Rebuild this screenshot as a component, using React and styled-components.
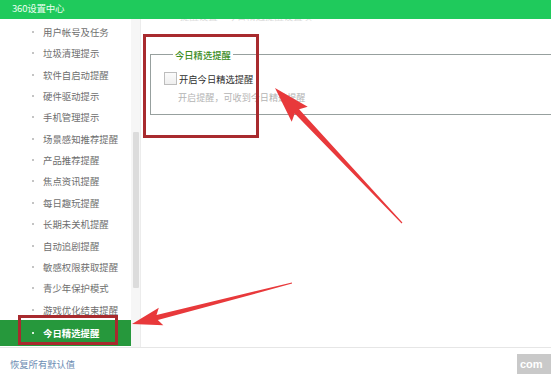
import React from "react";
import styled, { createGlobalStyle } from "styled-components";

const Global = createGlobalStyle`
  html, body { margin: 0; padding: 0; background: #fff; }
  body { width: 551px; height: 378px; overflow: hidden; font-family: "Noto Sans CJK SC", "Noto Sans", sans-serif; }
`;

const Window = styled.div`
  position: relative;
  width: 551px;
  height: 378px;
  display: flex;
  flex-direction: column;
  background: #fff;
  overflow: hidden;
`;

const TitleBar = styled.div`
  height: 19px;
  flex: none;
  background: #1fca5c;
  color: #eafff0;
  font-size: 9.5px;
  line-height: 17px;
  padding-left: 12px;
  letter-spacing: -0.2px;
`;

const Body = styled.div`
  flex: 1;
  display: flex;
  min-height: 0;
`;

const Sidebar = styled.div`
  width: 140px;
  flex: none;
  display: flex;
  border-right: 1px solid #ececec;
  overflow: hidden;
`;

const NavList = styled.ul`
  list-style: none;
  margin: 0;
  padding: 2.3px 0 0;
  width: 131px;
  flex: none;
`;

const NavItem = styled.li`
  display: flex;
  align-items: center;
  gap: 9px;
  padding-left: 32px;
  height: ${(p) => (p.$active ? "26px" : "21.36px")};
  margin: ${(p) => (p.$active ? "-0.6px 0 0" : "0")};
  background: ${(p) => (p.$active ? "#26983c" : "transparent")};
  color: ${(p) => (p.$active ? "#ffffff" : "#6e6e6e")};
  font-size: 9.4px;
  font-weight: ${(p) => (p.$active ? 700 : 400)};
  white-space: nowrap;
`;

const Bullet = styled.span`
  width: 2px;
  height: 2px;
  flex: none;
  background: ${(p) => (p.$active ? "#d8f0dc" : "#c4c4c4")};
`;

const ScrollTrack = styled.div`
  width: 9px;
  flex: none;
  background: #f6f6f6;
  display: flex;
  justify-content: center;
`;

const ScrollThumb = styled.div`
  width: 6px;
  height: 156px;
  margin-top: 113px;
  background: #dcdcdc;
  border-radius: 1px;
`;

const Main = styled.div`
  flex: 1;
  overflow: hidden;
  padding-left: 9px;
`;

const HeaderClip = styled.div`
  height: 3px;
  overflow: hidden;
  margin-left: 30px;
  color: #dcdcdc;
  font-size: 9.4px;
  line-height: 12px;
  white-space: nowrap;
  word-spacing: 8px;
`;

const HeaderText = styled.div`
  margin-top: -9px;
`;

const Group = styled.fieldset`
  margin: 26.5px 0 0;
  width: 440px;
  padding: 11px 0 10px 13px;
  border: 1px solid #97a09e;
  border-right: none;
`;

const Legend = styled.legend`
  margin-left: 9px;
  padding: 0 2px;
  font-size: 9.3px;
  line-height: 12px;
  color: #3b8c1c;
  font-weight: 500;
`;

const CheckRow = styled.label`
  display: flex;
  align-items: center;
  gap: 2px;
  height: 14px;
  font-size: 9.3px;
  color: #2f2f2f;
`;

const Box = styled.span`
  width: 11px;
  height: 11px;
  flex: none;
  border: 1px solid #bdbdbd;
  background: linear-gradient(#fbfbfb, #efefef);
`;

const Hint = styled.div`
  margin: 4.5px 0 0 14px;
  font-size: 9.1px;
  line-height: 14px;
  color: #b4b4b4;
`;

const BottomBar = styled.div`
  height: 30px;
  flex: none;
  border-top: 1px solid #e6e6e6;
  display: flex;
  align-items: center;
  justify-content: space-between;
  padding-left: 10px;
`;

const ResetLink = styled.span`
  font-size: 9.3px;
  color: #6c8db3;
  margin-top: 1px;
`;

const Watermark = styled.span`
  height: 20px;
  width: 34px;
  margin-top: 2px;
  background: #c9c9c9;
  color: #fff;
  font-family: "Liberation Sans", sans-serif;
  font-weight: 700;
  font-size: 11px;
  line-height: 20px;
  padding-left: 3px;
  box-sizing: border-box;
  white-space: nowrap;
  overflow: hidden;
`;

const Mark = styled.div`
  position: absolute;
  border: 3px solid #a82a2e;
  box-sizing: border-box;
  pointer-events: none;
`;

const Overlay = styled.svg`
  position: absolute;
  left: 0;
  top: 0;
  pointer-events: none;
`;

const items = [
  "用户帐号及任务",
  "垃圾清理提示",
  "软件自启动提醒",
  "硬件驱动提示",
  "手机管理提示",
  "场景感知推荐提醒",
  "产品推荐提醒",
  "焦点资讯提醒",
  "每日趣玩提醒",
  "长期未关机提醒",
  "自动追剧提醒",
  "敏感权限获取提醒",
  "青少年保护模式",
  "游戏优化结束提醒",
  "今日精选提醒",
];

function arrowPoints(tip, tail, headLen, headHalf, shaftHalf) {
  const dx = tail[0] - tip[0];
  const dy = tail[1] - tip[1];
  const len = Math.hypot(dx, dy);
  const u = [dx / len, dy / len];
  const n = [-u[1], u[0]];
  const at = (d, w) => [tip[0] + u[0] * d + n[0] * w, tip[1] + u[1] * d + n[1] * w];
  const pts = [
    tip,
    at(headLen + 4, headHalf),
    at(headLen, shaftHalf),
    at(len, 0.6),
    at(len, -0.6),
    at(headLen, -shaftHalf),
    at(headLen + 4, -headHalf),
  ];
  return pts.map((p) => p.map((v) => v.toFixed(1)).join(",")).join(" ");
}

export default function App() {
  return (
    <>
      <Global />
      <Window>
        <TitleBar>360设置中心</TitleBar>
        <Body>
          <Sidebar>
            <NavList>
              {items.map((t, i) => {
                const active = i === items.length - 1;
                return (
                  <NavItem key={t} $active={active}>
                    <Bullet $active={active} />
                    {t}
                  </NavItem>
                );
              })}
            </NavList>
            <ScrollTrack>
              <ScrollThumb />
            </ScrollTrack>
          </Sidebar>
          <Main>
            <HeaderClip>
              <HeaderText>提醒设置 今日精选提醒设置项</HeaderText>
            </HeaderClip>
            <Group>
              <Legend>今日精选提醒</Legend>
              <CheckRow>
                <Box />
                开启今日精选提醒
              </CheckRow>
              <Hint>开启提醒，可收到今日精选提醒</Hint>
            </Group>
          </Main>
        </Body>
        <BottomBar>
          <ResetLink>恢复所有默认值</ResetLink>
          <Watermark>com</Watermark>
        </BottomBar>

        <Mark style={{ left: 143, top: 34, width: 116, height: 104 }} />
        <Mark style={{ left: 18, top: 315, width: 100, height: 30 }} />
        <Overlay width="551" height="378" viewBox="0 0 551 378">
          <polygon points={arrowPoints([275, 88], [402, 223], 32, 11, 3)} fill="#e8393b" />
          <polygon points={arrowPoints([132, 324], [292, 283], 26, 9, 2.6)} fill="#e8393b" />
        </Overlay>
      </Window>
    </>
  );
}
